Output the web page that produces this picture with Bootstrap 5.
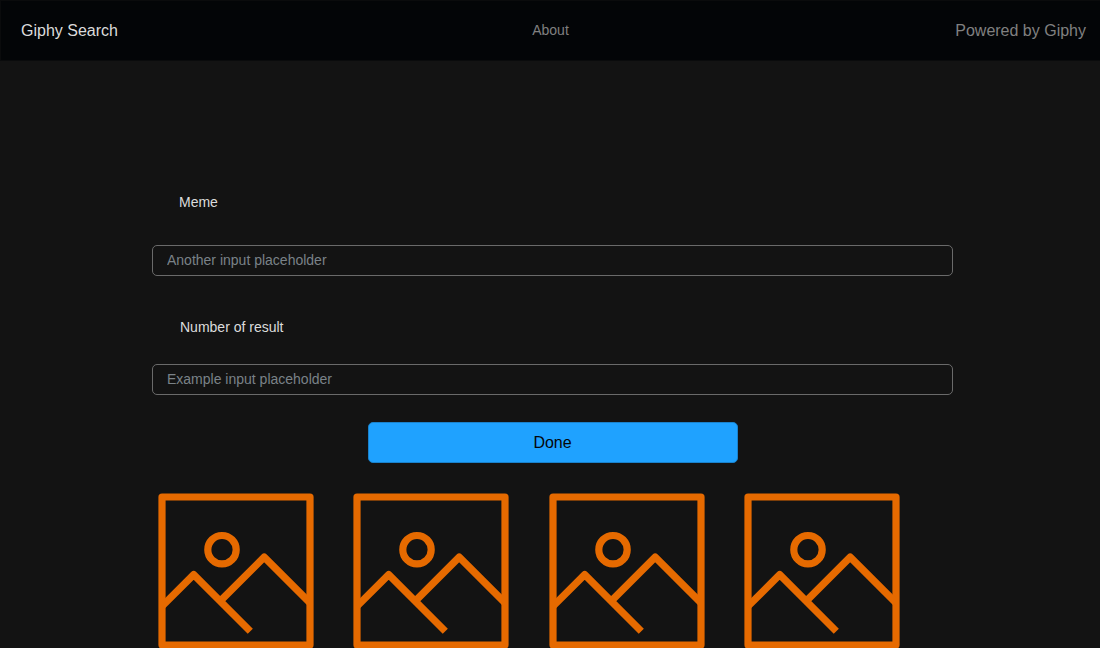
<!DOCTYPE html>
<html lang="en">
<head>
<meta charset="utf-8">
<meta name="viewport" content="width=device-width, initial-scale=1">
<title>Giphy Search</title>
<link href="https://cdn.jsdelivr.net/npm/bootstrap@5.3.0/dist/css/bootstrap.min.css" rel="stylesheet">
<style>
  body { background: #131313; color: #dcdcdc; font-family: "Liberation Sans", Arial, sans-serif; font-size: 14px; }
  .topbar { background: #030507; min-height: 61px; padding: 0 14px; border: 1px solid #0a0b0c; border-width: 1px 0 1px 1px; }
  .topbar .brand-link { color: #dcdcdc; font-size: 16px; padding-left: 6px; }
  .topbar .about-link { color: #808080; }
  .topbar .powered { color: #808080; font-size: 16px; }
  .page { padding: 131px 16px 0 21px; }
  .search-area { max-width: 801px; }
  .field-label { display: block; line-height: 21px; padding-left: 27px; }
  .meme-label { margin-bottom: 32px; }
  .count-label { margin: 41px 0 26px; padding-left: 28px; }
  .dark-input, .dark-input:focus { background: transparent; color: #dcdcdc; border-color: #6a6a6a; border-radius: 5px; height: 31px; padding: 3px 14px 5px; font-size: 14px; }
  .dark-input::placeholder { color: #7a8288; opacity: 1; }
  .done-btn { background: #1fa2ff; border: 1px solid #1a82cc; color: #05070a; max-width: 370px; height: 41px; margin-top: 27px; border-radius: 5px; font-size: 16px; }
  .gallery { max-width: 781px; margin: 30px 0 0 6px; }
  .thumb { display: block; width: 100%; max-width: 156px; }
</style>
</head>
<body>
<nav class="topbar row g-0 align-items-center">
  <div class="col"><a href="#" class="brand-link text-decoration-none">Giphy Search</a></div>
  <div class="col-auto"><a href="#" class="about-link text-decoration-none">About</a></div>
  <div class="col text-end powered">Powered by Giphy</div>
</nav>
<main class="page">
  <div class="search-area mx-auto">
    <form>
      <label class="field-label meme-label" for="meme">Meme</label>
      <input type="text" class="form-control form-control-sm dark-input" id="meme" placeholder="Another input placeholder">
      <label class="field-label count-label" for="count">Number of result</label>
      <input type="text" class="form-control form-control-sm dark-input" id="count" placeholder="Example input placeholder">
      <button type="button" class="btn done-btn d-block w-100 mx-auto">Done</button>
    </form>
    <svg class="d-none" aria-hidden="true">
      <symbol id="picture" viewBox="0 0 156 155">
        <g fill="none" stroke="#e66a00" stroke-width="7.2" stroke-linejoin="round">
          <rect x="4" y="4" width="148" height="148"/>
          <circle cx="64" cy="56.7" r="14.2"/>
          <path d="M4 113.3 35.7 81.6 92.3 138.2M62.7 107.6 106.2 64.1 152 109.9"/>
        </g>
      </symbol>
    </svg>
    <div class="gallery row row-cols-4 g-0">
      <div class="col"><svg class="thumb" viewBox="0 0 156 155" role="img" aria-label="Result 1"><use href="#picture"/></svg></div>
      <div class="col"><svg class="thumb" viewBox="0 0 156 155" role="img" aria-label="Result 2"><use href="#picture"/></svg></div>
      <div class="col"><svg class="thumb" viewBox="0 0 156 155" role="img" aria-label="Result 3"><use href="#picture"/></svg></div>
      <div class="col"><svg class="thumb" viewBox="0 0 156 155" role="img" aria-label="Result 4"><use href="#picture"/></svg></div>
    </div>
  </div>
</main>
<script src="https://cdn.jsdelivr.net/npm/bootstrap@5.3.0/dist/js/bootstrap.bundle.min.js"></script>
</body>
</html>
